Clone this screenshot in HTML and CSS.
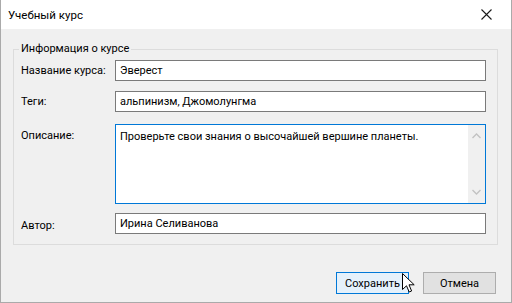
FILE: index.html
```html
<!DOCTYPE html>
<html lang="ru">
<head>
    <meta charset="UTF-8">
    <meta name="viewport" content="width=device-width, initial-scale=1.0">
    <title>Учебный курс</title>
    <link rel="stylesheet" href="styles.css">
</head>
<body>
    <div class="dialog">
        <!-- Title bar -->
        <div class="titlebar">
            <span class="title">Учебный курс</span>
            <button class="close" title="Закрыть">
                <svg width="11" height="11" viewBox="0 0 11 11">
                    <path d="M0.5 0.5 L10.5 10.5 M10.5 0.5 L0.5 10.5" stroke="#1a1a1a" stroke-width="1.1" fill="none"/>
                </svg>
            </button>
        </div>

        <div class="content">
            <!-- Course info group -->
            <fieldset class="group">
                <legend>Информация о курсе</legend>
                <div class="form">
                    <div class="row">
                        <label class="label">Название курса:</label>
                        <input class="field" type="text" value="Эверест">
                    </div>
                    <div class="row">
                        <label class="label">Теги:</label>
                        <input class="field" type="text" value="альпинизм, Джомолунгма">
                    </div>
                    <div class="row row-desc">
                        <label class="label">Описание:</label>
                        <div class="memo">
                            <div class="memo-text">Проверьте свои знания о высочайшей вершине планеты.</div>
                            <div class="scrollbar">
                                <svg width="9" height="6" viewBox="0 0 9 6"><path d="M0.5 5 L4.5 1 L8.5 5" stroke="#c2c2c2" stroke-width="1.3" fill="none"/></svg>
                                <svg width="9" height="6" viewBox="0 0 9 6"><path d="M0.5 1 L4.5 5 L8.5 1" stroke="#c2c2c2" stroke-width="1.3" fill="none"/></svg>
                            </div>
                        </div>
                    </div>
                    <div class="row row-author">
                        <label class="label">Автор:</label>
                        <input class="field" type="text" value="Ирина Селиванова">
                    </div>
                </div>
            </fieldset>

            <!-- Buttons -->
            <div class="buttons">
                <button class="btn btn-default">Сохранить</button>
                <button class="btn">Отмена</button>
                <svg class="cursor" width="13" height="20" viewBox="0 0 13 20">
                    <path d="M0.5 0.5 L0.5 16.5 L4.5 12.8 L7.2 19 L9.6 18 L7 11.8 L12.2 11.8 Z" fill="#fff" stroke="#000" stroke-width="1" stroke-linejoin="miter"/>
                </svg>
            </div>
        </div>
    </div>
</body>
</html>
```

FILE: styles.css
```css
* {
    box-sizing: border-box;
}

body {
    margin: 0;
    padding: 0;
    font-family: Roboto, 'Noto Sans', sans-serif;
    font-size: 11px;
    color: #000;
    background-color: #fff;
}

/* Window */
.dialog {
    width: 512px;
    height: 303px;
    display: flex;
    flex-direction: column;
    border: 1px solid #aaaaaa;
    border-top: none;
    background-color: #f0f0f0;
}

/* Title bar */
.titlebar {
    height: 29px;
    flex: none;
    display: flex;
    align-items: center;
    justify-content: space-between;
    background-color: #fff;
    padding-left: 7px;
}

.title {
    font-size: 11.5px;
    line-height: 16px;
}

.close {
    width: 44px;
    height: 29px;
    border: none;
    background: none;
    padding: 0;
    display: flex;
    align-items: center;
    justify-content: center;
    margin-right: 3px;
    margin-top: -1px;
}

/* Body */
.content {
    flex: 1;
    display: flex;
    flex-direction: column;
    padding: 12px 13px 8px 12px;
}

/* Group box */
.group {
    margin: 0;
    border: 1px solid #dcdcdc;
    padding: 3px 11px 10px 7px;
    min-width: 0;
}

.group legend {
    padding: 0 2px;
    margin-left: -2px;
    line-height: 16px;
}

.form {
    display: flex;
    flex-direction: column;
    gap: 10px;
}

.row {
    display: grid;
    grid-template-columns: 94px 1fr;
    align-items: center;
}

.row-desc {
    align-items: start;
    margin-top: 2px;
    margin-bottom: -1px;
}

.row-desc .label {
    padding-top: 4px;
}

.row-author .label {
    padding-top: 4px;
}

.label {
    line-height: 16px;
    white-space: nowrap;
}

.field {
    height: 21px;
    width: 100%;
    border: 1px solid #7a7a7a;
    background-color: #fff;
    font-family: inherit;
    font-size: 11px;
    color: #000;
    padding: 0 4px;
    margin: 0;
    outline: none;
}

/* Multi-line box with scrollbar */
.memo {
    height: 80px;
    border: 1px solid #0078d7;
    background-color: #fff;
    display: flex;
}

.memo-text {
    flex: 1;
    padding: 4px 4px;
    line-height: 16px;
}

.scrollbar {
    width: 17px;
    flex: none;
    background-color: #f0f0f0;
    display: flex;
    flex-direction: column;
    justify-content: space-between;
    align-items: center;
    padding: 8px 0 8px;
}

/* Buttons */
.buttons {
    margin-top: auto;
    display: flex;
    justify-content: flex-end;
    gap: 14px;
    padding-right: 2px;
    position: relative;
}

.btn {
    width: 73px;
    height: 22px;
    border: 1px solid #adadad;
    background-color: #e1e1e1;
    font-family: inherit;
    font-size: 11px;
    color: #000;
    padding: 0;
}

.btn-default {
    border-color: #0078d7;
    background-color: #e5f1fb;
}

.cursor {
    position: absolute;
    left: 389px;
    top: 1px;
}
```
